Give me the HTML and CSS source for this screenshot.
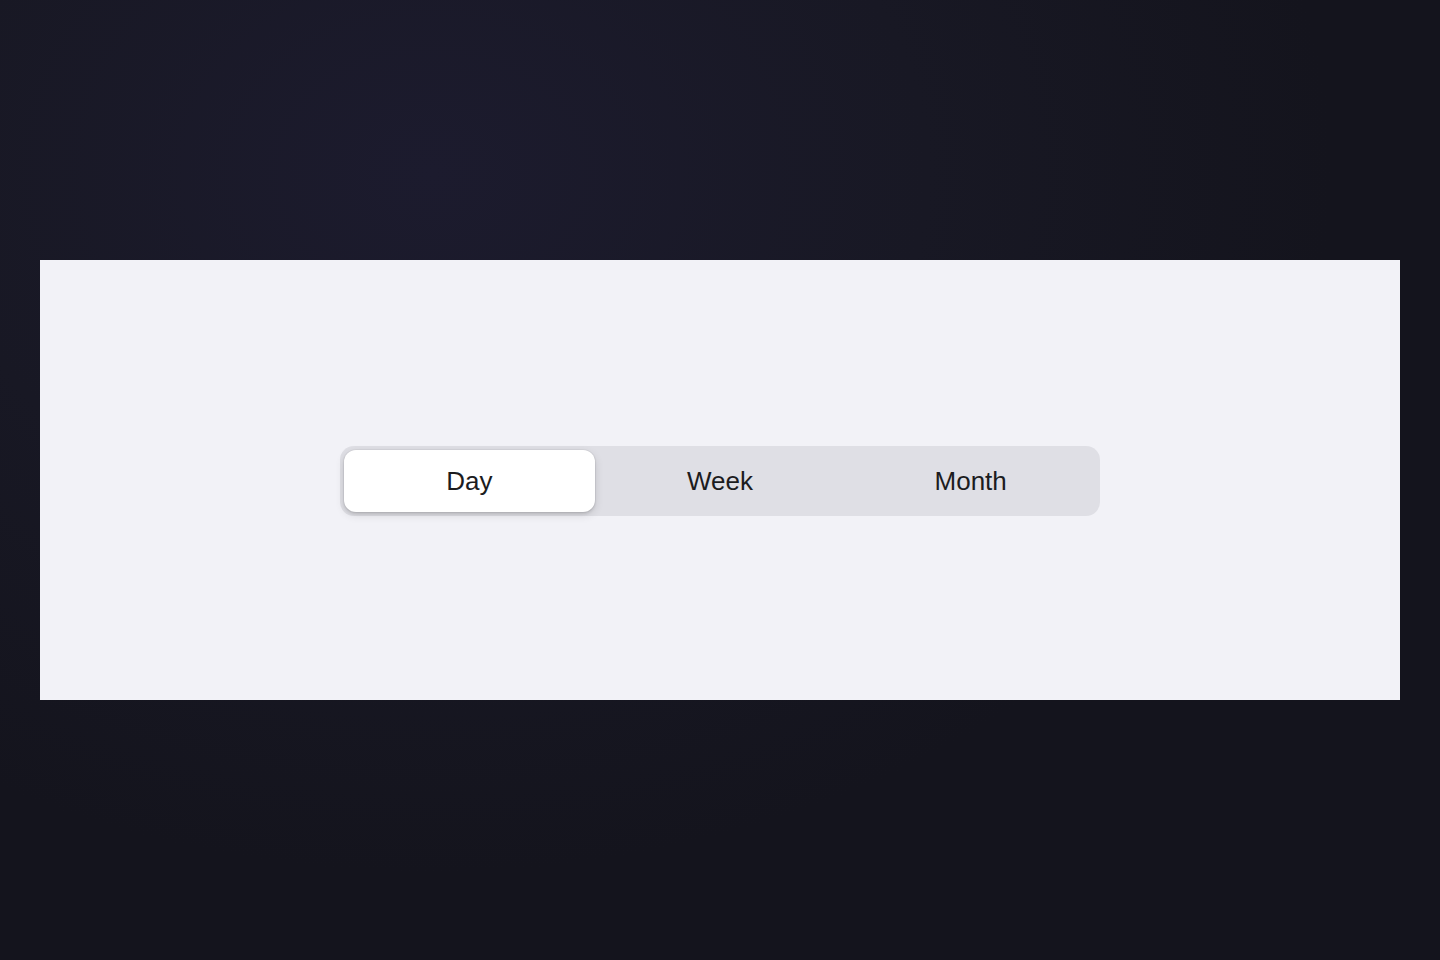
FILE: index.html
```html
<!DOCTYPE html>
<html lang="en">
<head>
<meta charset="utf-8">
<title>Segmented Control</title>
<link rel="stylesheet" href="styles.css">
</head>
<body>
<main class="stage">
  <section class="panel">
    <div class="segmented" role="tablist">
      <button class="segment is-active" role="tab" aria-selected="true">Day</button>
      <button class="segment" role="tab" aria-selected="false">Week</button>
      <button class="segment" role="tab" aria-selected="false">Month</button>
    </div>
  </section>
</main>
</body>
</html>
```

FILE: styles.css
```css
html, body {
  margin: 0;
  padding: 0;
  height: 100%;
}

body {
  background: radial-gradient(ellipse 900px 700px at 30% 18%, #1c1b2e 0%, #181824 55%, #14141d 100%);
  background-color: #15151e;
  font-family: "Liberation Sans", Arial, Helvetica, sans-serif;
}

.stage {
  box-sizing: border-box;
  height: 960px;
  padding: 260px 40px;
}

.panel {
  height: 440px;
  background: #f2f2f7;
  display: flex;
  align-items: center;
  justify-content: center;
}

.segmented {
  box-sizing: border-box;
  width: 760px;
  height: 70px;
  padding: 4px;
  background: #dfdfe5;
  border-radius: 14px;
  display: grid;
  grid-template-columns: repeat(3, 1fr);
  margin-top: 2px;
}

.segment {
  border: 0;
  margin: 0;
  padding: 0;
  background: transparent;
  font-family: "Liberation Sans", Arial, Helvetica, sans-serif;
  font-size: 26px;
  color: #1c1c1e;
  border-radius: 12px;
  cursor: pointer;
}

.segment.is-active {
  background: #ffffff;
  box-shadow: 0 3px 10px rgba(0, 0, 0, 0.12), 0 2px 3px rgba(0, 0, 0, 0.1), 0 0 0 1px rgba(0, 0, 0, 0.04);
}
```
